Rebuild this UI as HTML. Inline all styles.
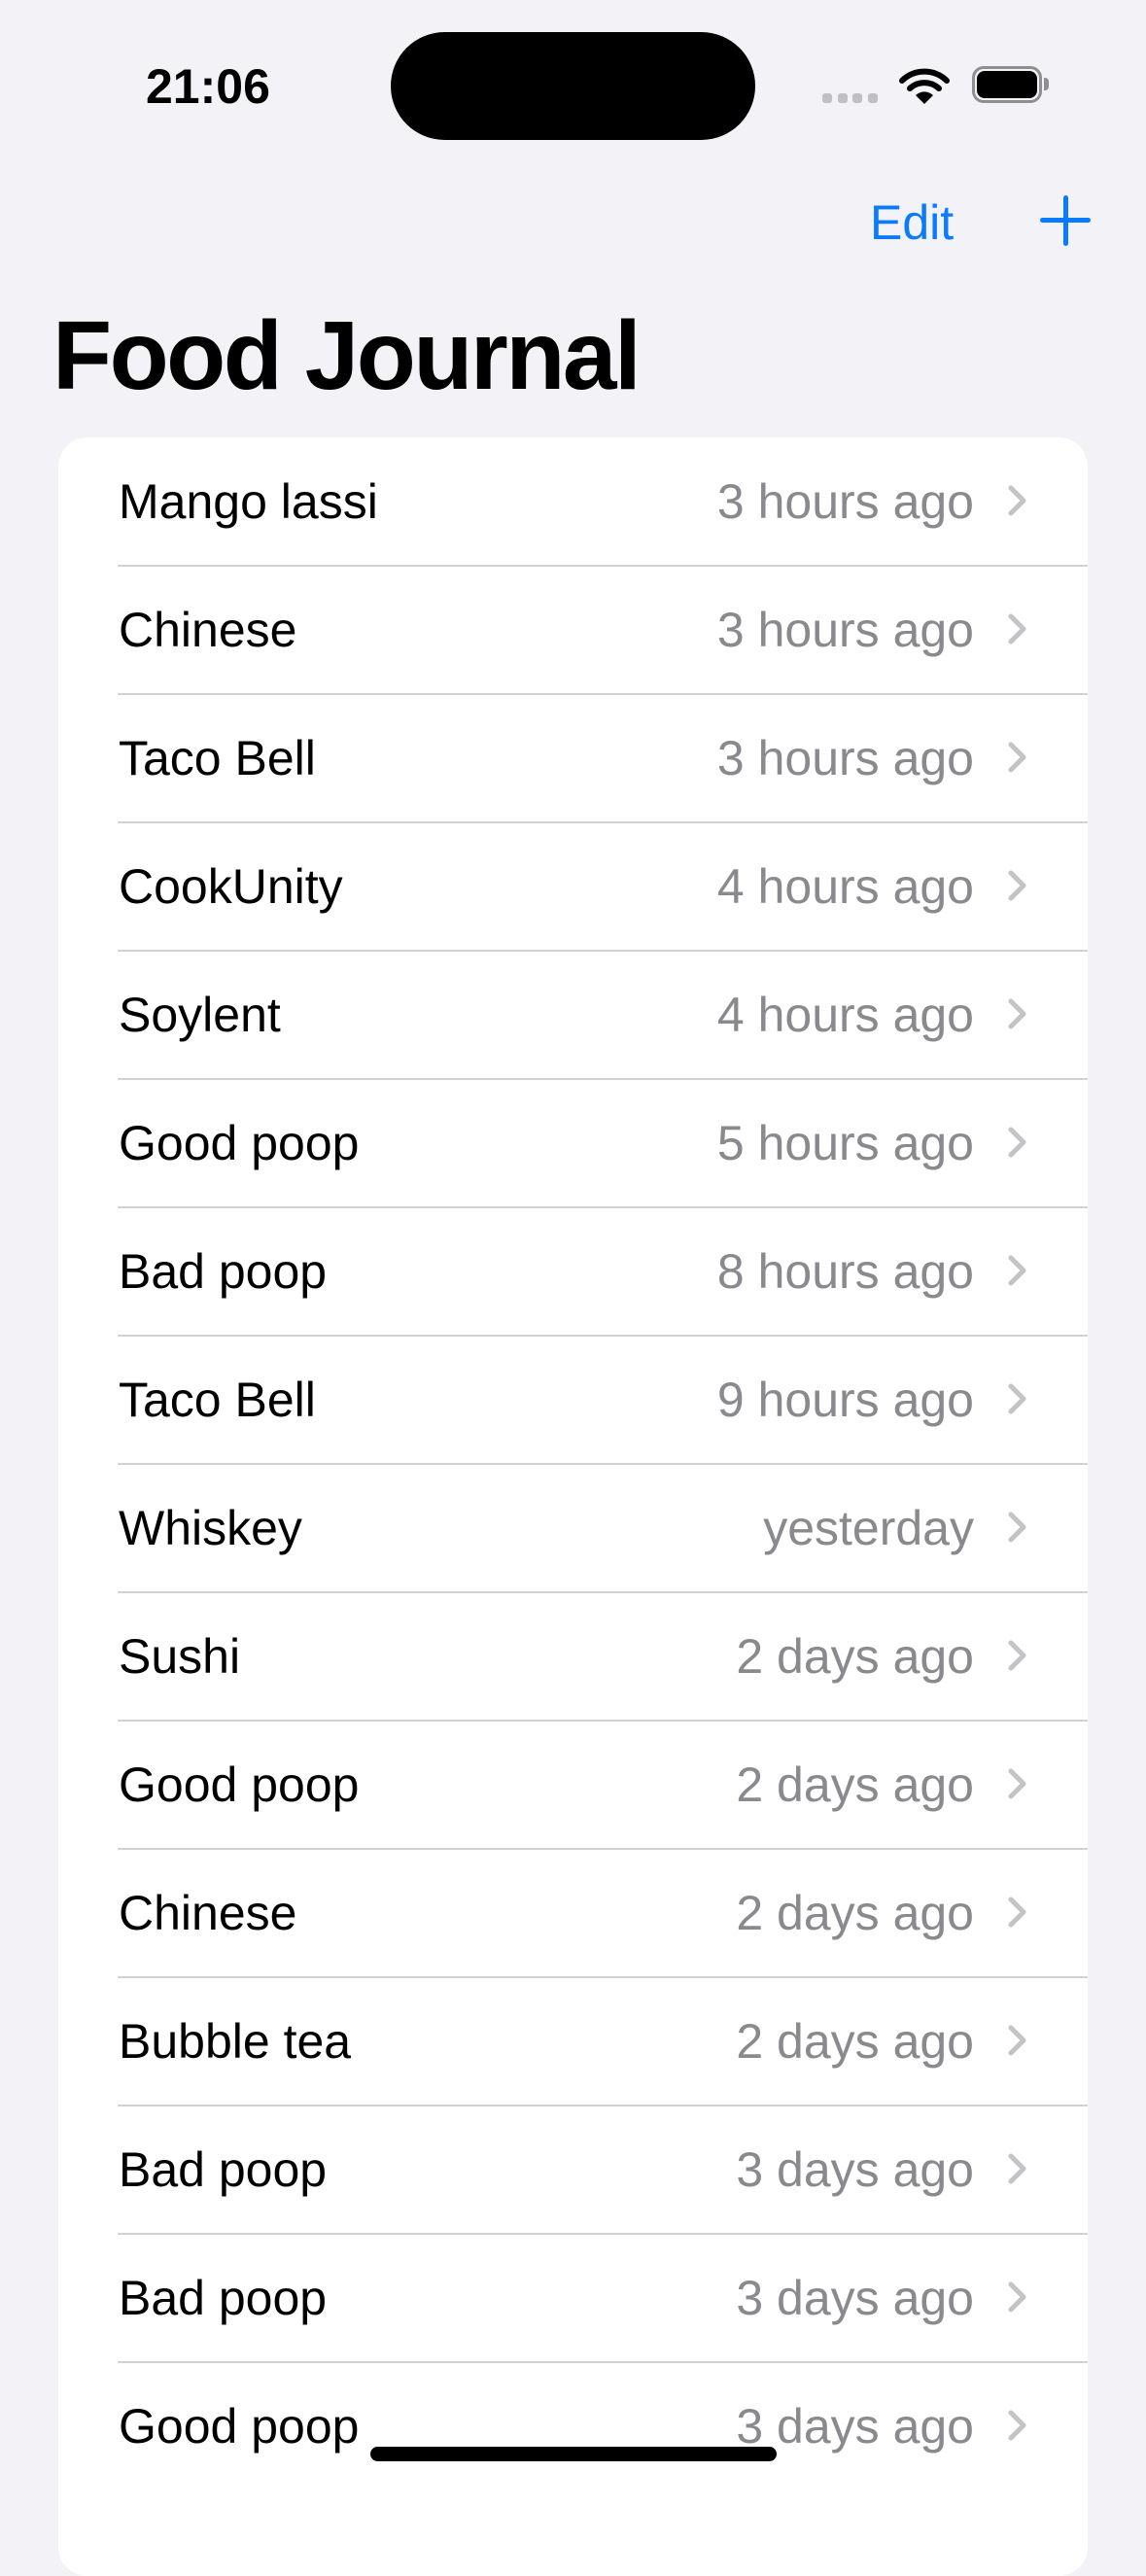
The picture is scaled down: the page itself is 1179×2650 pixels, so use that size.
<!DOCTYPE html>
<html><head><meta charset="utf-8"><style>
*{margin:0;padding:0;box-sizing:border-box}
body{width:1179px;height:2556px;background:#f2f2f7;position:relative;overflow:hidden;font-family:"Liberation Sans",sans-serif}
.a{position:absolute;white-space:nowrap}
.card{position:absolute;left:60px;top:450px;width:1059px;height:2200px;background:#fff;border-radius:30px}
.row{position:absolute;left:0;width:1119px;height:132px}
.l{position:absolute;left:122px;top:0;line-height:132px;font-size:50px;color:#000}
.r{position:absolute;right:117px;top:0;line-height:132px;font-size:50px;color:#8a8a8e}
.sep{position:absolute;left:121px;right:0;bottom:-1px;height:2px;background:#d1d1d6}
.ch{position:absolute;left:1036px;top:48px}
</style></head><body>
<div class="a" style="left:150px;top:64px;font-size:50px;line-height:50px;font-weight:bold">21:06</div>
<div class="a" style="left:402px;top:33px;width:375px;height:111px;background:#000;border-radius:56px"></div>
<div class="a" style="left:846px;top:96px;width:10px;height:10px;background:#c0c0c4;border-radius:3px"></div>
<div class="a" style="left:862px;top:96px;width:10px;height:10px;background:#c0c0c4;border-radius:3px"></div>
<div class="a" style="left:877px;top:96px;width:10px;height:10px;background:#c0c0c4;border-radius:3px"></div>
<div class="a" style="left:893px;top:96px;width:10px;height:10px;background:#c0c0c4;border-radius:3px"></div>
<svg class="a" style="left:925px;top:68px" width="52" height="40" viewBox="0 0 52 40">
<path d="M3 15 A33 33 0 0 1 49 15" stroke="#000" stroke-width="6" fill="none" stroke-linecap="round"/>
<path d="M11 23 A22 22 0 0 1 41 23" stroke="#000" stroke-width="6" fill="none" stroke-linecap="round"/>
<path d="M17 30 L26 39 L35 30 A13 13 0 0 0 17 30Z" fill="#000"/>
</svg>
<div class="a" style="left:1000px;top:68px;width:72px;height:38px;border:3px solid #8e8e93;border-radius:12px"></div>
<div class="a" style="left:1005px;top:73px;width:62px;height:28px;background:#000;border-radius:8px"></div>
<div class="a" style="left:1074px;top:80px;width:5px;height:13px;background:#8e8e93;border-radius:0 4px 4px 0"></div>
<div class="a" style="left:895px;top:204px;font-size:50px;line-height:50px;color:#0a7aff">Edit</div>
<div class="a" style="left:1094px;top:201px;width:5px;height:52px;background:#0a7aff;border-radius:3px"></div>
<div class="a" style="left:1070px;top:224px;width:52px;height:5px;background:#0a7aff;border-radius:3px"></div>
<div class="a" style="left:54px;top:316px;font-size:100px;line-height:100px;font-weight:bold;letter-spacing:-2.5px">Food Journal</div>
<div class="card"></div>
<div id="rows"></div>
<div class="a" style="left:0;top:450px;width:1179px;height:2106px">
<div class="row" style="top:0"><span class="l">Mango lassi</span><span class="r">3 hours ago</span><svg class="ch" width="22" height="34" viewBox="0 0 22 34"><path d="M4 4 L17 17 L4 30" stroke="#c4c4c7" stroke-width="5" fill="none" stroke-linecap="round" stroke-linejoin="round"/></svg><div class="sep"></div></div>
<div class="row" style="top:132px"><span class="l">Chinese</span><span class="r">3 hours ago</span><svg class="ch" width="22" height="34" viewBox="0 0 22 34"><path d="M4 4 L17 17 L4 30" stroke="#c4c4c7" stroke-width="5" fill="none" stroke-linecap="round" stroke-linejoin="round"/></svg><div class="sep"></div></div>
<div class="row" style="top:264px"><span class="l">Taco Bell</span><span class="r">3 hours ago</span><svg class="ch" width="22" height="34" viewBox="0 0 22 34"><path d="M4 4 L17 17 L4 30" stroke="#c4c4c7" stroke-width="5" fill="none" stroke-linecap="round" stroke-linejoin="round"/></svg><div class="sep"></div></div>
<div class="row" style="top:396px"><span class="l">CookUnity</span><span class="r">4 hours ago</span><svg class="ch" width="22" height="34" viewBox="0 0 22 34"><path d="M4 4 L17 17 L4 30" stroke="#c4c4c7" stroke-width="5" fill="none" stroke-linecap="round" stroke-linejoin="round"/></svg><div class="sep"></div></div>
<div class="row" style="top:528px"><span class="l">Soylent</span><span class="r">4 hours ago</span><svg class="ch" width="22" height="34" viewBox="0 0 22 34"><path d="M4 4 L17 17 L4 30" stroke="#c4c4c7" stroke-width="5" fill="none" stroke-linecap="round" stroke-linejoin="round"/></svg><div class="sep"></div></div>
<div class="row" style="top:660px"><span class="l">Good poop</span><span class="r">5 hours ago</span><svg class="ch" width="22" height="34" viewBox="0 0 22 34"><path d="M4 4 L17 17 L4 30" stroke="#c4c4c7" stroke-width="5" fill="none" stroke-linecap="round" stroke-linejoin="round"/></svg><div class="sep"></div></div>
<div class="row" style="top:792px"><span class="l">Bad poop</span><span class="r">8 hours ago</span><svg class="ch" width="22" height="34" viewBox="0 0 22 34"><path d="M4 4 L17 17 L4 30" stroke="#c4c4c7" stroke-width="5" fill="none" stroke-linecap="round" stroke-linejoin="round"/></svg><div class="sep"></div></div>
<div class="row" style="top:924px"><span class="l">Taco Bell</span><span class="r">9 hours ago</span><svg class="ch" width="22" height="34" viewBox="0 0 22 34"><path d="M4 4 L17 17 L4 30" stroke="#c4c4c7" stroke-width="5" fill="none" stroke-linecap="round" stroke-linejoin="round"/></svg><div class="sep"></div></div>
<div class="row" style="top:1056px"><span class="l">Whiskey</span><span class="r">yesterday</span><svg class="ch" width="22" height="34" viewBox="0 0 22 34"><path d="M4 4 L17 17 L4 30" stroke="#c4c4c7" stroke-width="5" fill="none" stroke-linecap="round" stroke-linejoin="round"/></svg><div class="sep"></div></div>
<div class="row" style="top:1188px"><span class="l">Sushi</span><span class="r">2 days ago</span><svg class="ch" width="22" height="34" viewBox="0 0 22 34"><path d="M4 4 L17 17 L4 30" stroke="#c4c4c7" stroke-width="5" fill="none" stroke-linecap="round" stroke-linejoin="round"/></svg><div class="sep"></div></div>
<div class="row" style="top:1320px"><span class="l">Good poop</span><span class="r">2 days ago</span><svg class="ch" width="22" height="34" viewBox="0 0 22 34"><path d="M4 4 L17 17 L4 30" stroke="#c4c4c7" stroke-width="5" fill="none" stroke-linecap="round" stroke-linejoin="round"/></svg><div class="sep"></div></div>
<div class="row" style="top:1452px"><span class="l">Chinese</span><span class="r">2 days ago</span><svg class="ch" width="22" height="34" viewBox="0 0 22 34"><path d="M4 4 L17 17 L4 30" stroke="#c4c4c7" stroke-width="5" fill="none" stroke-linecap="round" stroke-linejoin="round"/></svg><div class="sep"></div></div>
<div class="row" style="top:1584px"><span class="l">Bubble tea</span><span class="r">2 days ago</span><svg class="ch" width="22" height="34" viewBox="0 0 22 34"><path d="M4 4 L17 17 L4 30" stroke="#c4c4c7" stroke-width="5" fill="none" stroke-linecap="round" stroke-linejoin="round"/></svg><div class="sep"></div></div>
<div class="row" style="top:1716px"><span class="l">Bad poop</span><span class="r">3 days ago</span><svg class="ch" width="22" height="34" viewBox="0 0 22 34"><path d="M4 4 L17 17 L4 30" stroke="#c4c4c7" stroke-width="5" fill="none" stroke-linecap="round" stroke-linejoin="round"/></svg><div class="sep"></div></div>
<div class="row" style="top:1848px"><span class="l">Bad poop</span><span class="r">3 days ago</span><svg class="ch" width="22" height="34" viewBox="0 0 22 34"><path d="M4 4 L17 17 L4 30" stroke="#c4c4c7" stroke-width="5" fill="none" stroke-linecap="round" stroke-linejoin="round"/></svg><div class="sep"></div></div>
<div class="row" style="top:1980px"><span class="l">Good poop</span><span class="r">3 days ago</span><svg class="ch" width="22" height="34" viewBox="0 0 22 34"><path d="M4 4 L17 17 L4 30" stroke="#c4c4c7" stroke-width="5" fill="none" stroke-linecap="round" stroke-linejoin="round"/></svg></div>
</div>
<div class="a" style="left:381px;top:2517px;width:418px;height:15px;background:#000;border-radius:8px"></div>
</body></html>
